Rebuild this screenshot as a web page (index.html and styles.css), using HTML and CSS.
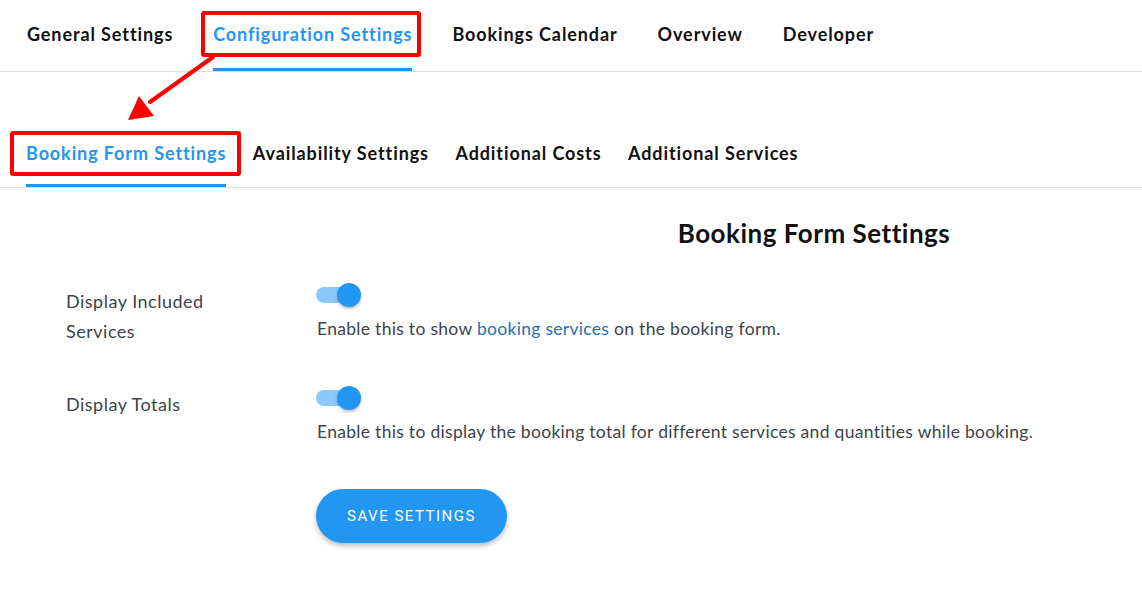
FILE: index.html
```html
<!DOCTYPE html>
<html lang="en">
<head>
<meta charset="utf-8">
<title>Booking Form Settings</title>
<link rel="stylesheet" href="styles.css">
</head>
<body>
<div class="page">
  <nav class="main-nav">
    <a class="tab">General Settings</a>
    <a class="tab active">Configuration Settings</a>
    <a class="tab">Bookings Calendar</a>
    <a class="tab">Overview</a>
    <a class="tab">Developer</a>
  </nav>
  <nav class="sub-nav">
    <a class="tab active">Booking Form Settings</a>
    <a class="tab">Availability Settings</a>
    <a class="tab">Additional Costs</a>
    <a class="tab">Additional Services</a>
  </nav>

  <h2 class="section-title">Booking Form Settings</h2>

  <div class="settings">
    <div class="row">
      <div class="label">Display Included<br>Services</div>
      <div class="field">
        <span class="switch"><span class="track"></span><span class="thumb"></span></span>
        <p class="desc">Enable this to show <a class="link">booking services</a> on the booking form.</p>
      </div>
    </div>
    <div class="row">
      <div class="label">Display Totals</div>
      <div class="field">
        <span class="switch"><span class="track"></span><span class="thumb"></span></span>
        <p class="desc">Enable this to display the booking total for different services and quantities while booking.</p>
      </div>
    </div>
    <div class="row">
      <div class="label"></div>
      <div class="field">
        <button class="save-btn">SAVE SETTINGS</button>
      </div>
    </div>
  </div>

  <div class="annot annot-config"></div>
  <div class="annot annot-booking"></div>
  <svg class="annot-arrow" width="120" height="80" viewBox="0 0 120 80">
    <line x1="93" y1="2" x2="30" y2="47" stroke="#ff0000" stroke-width="4" stroke-linecap="round"/>
    <polygon points="8,65 19,41 34,61" fill="#ff0000"/>
  </svg>
</div>
</body>
</html>
```

FILE: styles.css
```css
* { box-sizing: border-box; }
html, body { margin: 0; padding: 0; background: #fff; }
body {
  font-family: "Lato", "Noto Sans", "DejaVu Sans", sans-serif;
  color: #3c434a;
}
.page { position: relative; width: 1142px; height: 591px; overflow: hidden; }

.main-nav {
  display: flex;
  gap: 40px;
  padding-left: 27px;
  height: 72px;
  border-bottom: 1px solid #dcdcdc;
}
.sub-nav {
  display: flex;
  gap: 26.5px;
  padding-left: 26px;
  margin-top: 71px;
  height: 45px;
  border-bottom: 1px solid #dcdcdc;
}
.tab {
  display: flex;
  align-items: center;
  font-size: 18px;
  font-weight: 700;
  letter-spacing: 0.9px;
  color: #111;
  border-bottom: 3px solid transparent;
  white-space: nowrap;
}
.main-nav .tab { height: 71px; padding-bottom: 1px; }
.sub-nav .tab { height: 44px; padding-bottom: 22px; }
.tab.active { color: #2196f3; border-bottom-color: #2196f3; }

.section-title {
  margin: 30px 0 0 0;
  padding-left: 486px;
  text-align: center;
  font-size: 26px;
  font-weight: 700;
  letter-spacing: 0.5px;
  color: #111;
  line-height: 30px;
}

.settings { margin-top: 38px; }
.row { display: flex; }
.row + .row { margin-top: 43px; }
.label {
  width: 316px;
  padding-left: 66px;
  font-size: 18px;
  line-height: 30px;
  letter-spacing: 0.5px;
  color: #3c434a;
}
.field { display: flex; flex-direction: column; align-items: flex-start; }
.switch {
  position: relative;
  display: block;
  width: 46px;
  height: 24px;
  margin-top: -3px;
}
.track {
  position: absolute;
  left: 0; top: 4px;
  width: 36px; height: 16px;
  border-radius: 8px;
  background: #8dc8fa;
}
.thumb {
  position: absolute;
  left: 21px; top: 0;
  width: 24px; height: 24px;
  border-radius: 50%;
  background: #2196f3;
  box-shadow: 0 2px 3px rgba(0,0,0,0.25);
}
.desc {
  margin: 11px 0 0 1px;
  font-size: 17.5px;
  line-height: 22px;
  letter-spacing: 0.3px;
  color: #3c434a;
}
.link { color: #2271b1; }

.save-btn {
  margin-top: 3px;
  width: 191px;
  height: 54px;
  border: none;
  border-radius: 27px;
  background: #2196f3;
  color: #fff;
  font-family: "Roboto", "Liberation Sans", sans-serif;
  font-size: 15px;
  letter-spacing: 1.5px;
  font-weight: 400;
  box-shadow: 0 3px 5px rgba(0,0,0,0.25);
}

.annot {
  position: absolute;
  border: 4px solid #ff0000;
  border-radius: 3px;
}
.annot-config { left: 201px; top: 11px; width: 220px; height: 46px; }
.annot-booking { left: 10px; top: 131px; width: 231px; height: 45px; }
.annot-arrow { position: absolute; left: 120px; top: 55px; }
```
